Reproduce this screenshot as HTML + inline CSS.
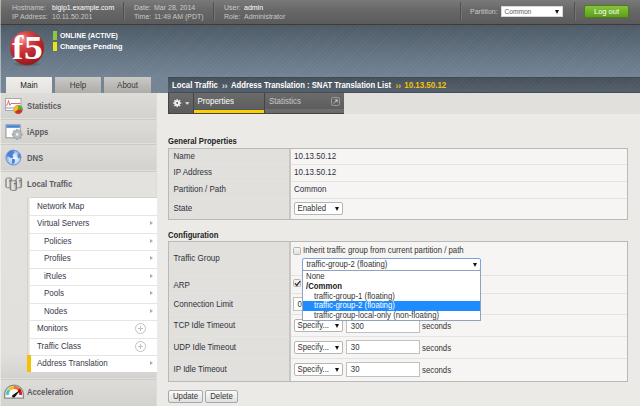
<!DOCTYPE html>
<html><head><meta charset="utf-8">
<style>
*{margin:0;padding:0;box-sizing:border-box}
html,body{width:640px;height:406px;overflow:hidden;background:#ebeae6;font-family:"Liberation Sans",sans-serif;color:#333}
.a{position:absolute;white-space:nowrap}
#top{position:absolute;left:0;top:0;width:640px;height:25px;background:linear-gradient(#797979,#676767 45%,#5b5b5b);border-bottom:1px solid #3c3c3c}
#top .l{position:absolute;font-size:7px;color:#c9c9c9;line-height:8px;white-space:nowrap}
#top .v{position:absolute;font-size:7px;color:#fff;line-height:8px;white-space:nowrap}
.dv{position:absolute;top:2px;width:2px;height:19px;border-left:1px solid #4f4f4f;border-right:1px solid #767676}
#banner{position:absolute;left:0;top:25px;width:640px;height:68px;
background-image:repeating-linear-gradient(135deg,rgba(255,255,255,0.018) 0 1px,rgba(0,0,0,0.02) 1px 3px),linear-gradient(#4f5c68 0,#667686 30px,#758696 52px,#758696 69px)}
#sidebar{position:absolute;left:0;top:93px;width:157px;height:313px;background:#cbcac6;border-right:1px solid #dddcd8}
.tab{position:absolute;top:77px;height:16px;font-size:8px;text-align:center;line-height:17.5px;color:#3a3a3a;background:linear-gradient(#cac9c5,#adaca8)}
.mi{position:absolute;left:0;width:156px;height:26px;background:linear-gradient(#dddcd8,#d3d2ce);border-bottom:1px solid #e1e0dc}
.mi .t{position:absolute;left:27px;top:0.8px;line-height:25px;font-size:7.7px;font-weight:bold;color:#5a5a60}
#sub{position:absolute;left:27px;top:196.5px;width:129.5px;height:175.5px;background:#fff;border-left:3px solid #dcdbd7;border-top:0.5px solid #d4d3cf}
.si{position:absolute;left:0;width:126.5px;height:17.5px;border-top:1px solid #e6e5e1;font-size:8px;line-height:15.5px;color:#383848}
.si .t{position:absolute;left:7px;top:0}
.si .t2{position:absolute;left:14px;top:0}
.arr{position:absolute;right:3.5px;top:5px;width:0;height:0;border-left:3px solid #aaa;border-top:2.5px solid transparent;border-bottom:2.5px solid transparent}
.plus{position:absolute;left:105px;top:2px;width:11px;height:11px;border:1px solid #c2c2c2;border-radius:50%}
.plus:before{content:"";position:absolute;left:4px;top:2px;width:1px;height:5px;background:#c2c2c2}
.plus:after{content:"";position:absolute;left:2px;top:4px;width:5px;height:1px;background:#c2c2c2}
#hdr{position:absolute;left:168px;top:77px;width:472px;height:16px;background-image:repeating-linear-gradient(135deg,rgba(255,255,255,0.018) 0 1px,rgba(0,0,0,0.02) 1px 3px),linear-gradient(#48535e,#55616d);border-top:1px solid #3f4a54;border-bottom:1px solid #434d57}
#hdr .t{position:absolute;left:4px;top:0;line-height:15px;font-size:7.8px;font-weight:bold;color:#fff;white-space:nowrap}
#tbrow{position:absolute;left:168px;top:93px;width:472px;height:21px;background:#e1e0dc}
#tbc{position:absolute;left:168px;top:93px;width:176px;height:21px;background:#454545}
.tb{position:absolute;top:93px;height:20px;background:linear-gradient(#6b6b6b,#5b5b5b)}
.sec{position:absolute;left:168px;font-size:7.7px;font-weight:bold;color:#222;white-space:nowrap}
table{position:absolute;left:168px;width:460px;border-collapse:collapse;border:1px solid #b9b9b9;font-size:8px;color:#303040}
td{border-top:1px solid #e4e3df;padding:0 0 1px 0;vertical-align:middle;white-space:nowrap}
td.k{width:121px;background:#e1e0dc;padding-left:4.5px;border-right:2px solid #c8c7c3}
.ty{display:inline-block;transform:scaleY(1.17)}
.sec,.sec2,.mi .t,.si .t,.si .t2,.hd{transform:scaleY(1.17)}
td.v{background:#f6f5f3;padding-left:3.5px}
.sel{position:absolute;background:#fff;border:1px solid #b5b5b5;border-radius:2px;font-size:7.8px;color:#333;white-space:nowrap}
.inp{position:absolute;background:#fff;border:1px solid #c0c0c0;font-size:7.8px;color:#333;white-space:nowrap}
.tri{position:absolute;width:0;height:0;border-left:2px solid transparent;border-right:2px solid transparent;border-top:4px solid #111}
.cb{position:absolute;width:8px;height:8px;background:linear-gradient(#f4f4f4,#e0e0e0);border:1px solid #b4b4b4;border-radius:1.5px}
.btn{position:absolute;top:390px;height:13px;background:linear-gradient(#fafafa,#e0e0e0);border:1px solid #a9a9a9;border-radius:2px;font-size:7.8px;line-height:11px;text-align:center;color:#333}
.sec2{position:absolute;font-size:7.8px;color:#333;white-space:nowrap}
</style></head><body>
<div id="top">
  <div class="l" style="left:12px;top:4px">Hostname:</div>
  <div class="v" style="left:52px;top:4px">bigip1.example.com</div>
  <div class="l" style="left:12px;top:12.5px">IP Address:</div>
  <div class="l" style="left:52px;top:12.5px">10.11.50.201</div>
  <div class="dv" style="left:123px"></div>
  <div class="l" style="left:134px;top:4px">Date:</div>
  <div class="l" style="left:154px;top:4px">Mar 28, 2014</div>
  <div class="l" style="left:134px;top:12.5px">Time:</div>
  <div class="l" style="left:154px;top:12.5px">11:49 AM (PDT)</div>
  <div class="dv" style="left:213px"></div>
  <div class="l" style="left:224px;top:4px">User:</div>
  <div class="v" style="left:244px;top:4px">admin</div>
  <div class="l" style="left:224px;top:12.5px">Role:</div>
  <div class="l" style="left:244px;top:12.5px">Administrator</div>
  <div class="dv" style="left:460px"></div>
  <div class="l" style="left:470px;top:8px">Partition:</div>
  <div class="a" style="left:500.5px;top:5.8px;width:62.5px;height:11.5px;background:#fff;border:1px solid #d8d8d8;font-size:6.6px;line-height:9.5px;color:#5a5a5a;padding-left:3px">Common<span class="tri" style="left:53px;top:3px;border-top-color:#111;border-left-width:2.4px;border-right-width:2.4px;border-top-width:4px"></span></div>
  <div class="dv" style="left:574px"></div>
  <div class="a" style="left:584px;top:5px;width:45px;height:13px;background:linear-gradient(#86c53a,#5d9e1c);border:1px solid #4c7d1a;border-radius:2px;font-size:7.5px;line-height:11px;color:#fff;text-align:center">Log out</div>
</div>
<div id="banner"></div>
<!-- logo -->
<div class="a" style="left:12px;top:61px;width:30px;height:6px;border-radius:50%;background:radial-gradient(closest-side,rgba(30,30,30,0.45),rgba(30,30,30,0))"></div>
<div class="a" style="left:10px;top:31px;width:34px;height:34px;border-radius:50%;background:radial-gradient(circle at 36% 24%,#f2a4a4 0,#d94a4e 20%,#c02a30 46%,#a01c21 72%,#7c1216 100%)"></div>
<div class="a" style="left:12px;top:28px;font-family:'Liberation Serif',serif;font-weight:bold;font-size:34px;line-height:40px;color:#fff">f</div>
<div class="a" style="left:24px;top:28px;font-family:'Liberation Serif',serif;font-weight:bold;font-size:33.5px;line-height:40px;color:#fff;transform:scaleX(1.12);transform-origin:0 0">5</div>
<div class="a" style="left:53px;top:31px;width:4px;height:9px;background:#8dc63f"></div>
<div class="a" style="left:53px;top:42px;width:4px;height:9px;background:#e6e619"></div>
<div class="a" style="left:60px;top:31px;font-size:6.9px;font-weight:bold;color:#fff;line-height:9px">ONLINE (ACTIVE)</div>
<div class="a" style="left:60px;top:42px;font-size:7.4px;font-weight:bold;color:#fff;line-height:9.5px">Changes Pending</div>
<!-- tabs -->
<div class="tab" style="left:6px;width:46px;background:linear-gradient(#efeeea,#e3e2de);color:#222"><span class="ty">Main</span></div>
<div class="tab" style="left:55px;width:46px"><span class="ty">Help</span></div>
<div class="tab" style="left:104px;width:47px"><span class="ty">About</span></div>
<!-- sidebar -->
<div id="sidebar">
  <div class="mi" style="top:0px;height:26px"><div class="t" style="line-height:25px">Statistics</div></div>
  <div class="mi" style="top:27px;height:24px"><div class="t" style="line-height:23px">iApps</div></div>
  <div class="mi" style="top:52px;height:26px"><div class="t" style="line-height:25px">DNS</div></div>
  <div class="mi" style="top:79px;height:207px;background:linear-gradient(#e3e2de 0,#e1e0dc 180px,#d3d2ce 206px)"><div class="t" style="line-height:23px">Local Traffic</div></div>
  <div class="mi" style="top:287px;height:26px;border-bottom:none"><div class="t" style="line-height:24px">Acceleration</div></div>
</div>
<div class="a" style="left:0;top:0;width:1px;height:406px;background:rgba(255,255,255,0.45)"></div>
<div id="sub">
  <div class="si" style="top:0;border-top:none;line-height:17px"><div class="t">Network Map</div></div>
  <div class="si" style="top:17.5px"><div class="t">Virtual Servers</div><div class="arr"></div></div>
  <div class="si" style="top:35px"><div class="t2">Policies</div><div class="arr"></div></div>
  <div class="si" style="top:52.5px"><div class="t2">Profiles</div><div class="arr"></div></div>
  <div class="si" style="top:70px"><div class="t2">iRules</div><div class="arr"></div></div>
  <div class="si" style="top:87.5px"><div class="t2">Pools</div><div class="arr"></div></div>
  <div class="si" style="top:105px"><div class="t2">Nodes</div><div class="arr"></div></div>
  <div class="si" style="top:122.5px"><div class="t">Monitors</div><div class="plus"></div></div>
  <div class="si" style="top:140px"><div class="t">Traffic Class</div><div class="plus"></div></div>
  <div class="si" style="top:157.5px"><div class="t">Address Translation</div><div class="arr"></div></div>
</div>
<div class="a" style="left:27px;top:196.5px;width:3px;height:175.5px;background:linear-gradient(90deg,#d2d1cd 0,#d2d1cd 1px,#e4e3df 1px,#ecebe8 3px)"></div>
<div class="a" style="left:27px;top:355px;width:3.5px;height:17px;background:#f6c200"></div>
<!-- sidebar icons -->
<svg class="a" style="left:0;top:0" width="160" height="406" viewBox="0 0 160 406">
 <defs>
  <linearGradient id="srv" x1="0" x2="1"><stop offset="0" stop-color="#8a8a8a"/><stop offset="0.3" stop-color="#e8e8e8"/><stop offset="0.7" stop-color="#d0d0d0"/><stop offset="1" stop-color="#7a7a7a"/></linearGradient>
  <radialGradient id="glb" cx="0.55" cy="0.55" r="0.6"><stop offset="0" stop-color="#ffffff"/><stop offset="0.55" stop-color="#c4d7f3"/><stop offset="1" stop-color="#6d98dc"/></radialGradient>
 </defs>
 <!-- statistics -->
 <rect x="5.5" y="98.5" width="15.5" height="12" fill="#fbfbfb" stroke="#a8a8a8" stroke-width="1"/>
 <rect x="6" y="107" width="14.5" height="2" fill="#b9cde6"/>
 <polyline points="6,105.5 7.5,104.5 8.5,100.5 9.8,105.3 11,103.5 20.5,103.5" fill="none" stroke="#de5a62" stroke-width="0.9"/>
 <circle cx="18.2" cy="109.6" r="4.4" fill="#d92a2a" stroke="#999" stroke-width="0.4"/>
 <path d="M18.2,109.6 L18.2,105.2 A4.4,4.4 0 0 1 22.6,109.9 Z" fill="#4cb82f"/>
 <path d="M18.2,109.6 L14.6,112.1 A4.4,4.4 0 0 1 18.2,105.2 Z" fill="#f1c21b"/>
 <!-- iApps -->
 <rect x="6" y="124.8" width="14.2" height="13" fill="#fff" stroke="#8c8c8c" stroke-width="0.9"/>
 <rect x="6.4" y="125.2" width="13.4" height="2.6" fill="#3f86d8"/>
 <g transform="translate(17.2,134.4)">
  <g fill="#a9b3b3" stroke="#8c9696" stroke-width="0.5">
   <circle r="3.9"/>
   <g id="teeth"><rect x="-1.1" y="-5.1" width="2.2" height="10.2" rx="0.6"/><rect x="-5.1" y="-1.1" width="10.2" height="2.2" rx="0.6"/></g>
   <g transform="rotate(45)"><rect x="-1.1" y="-5.1" width="2.2" height="10.2" rx="0.6"/><rect x="-5.1" y="-1.1" width="10.2" height="2.2" rx="0.6"/></g>
  </g>
  <circle r="3.6" fill="#b3bdbd"/>
  <circle r="1.3" fill="#eef2f2"/>
 </g>
 <!-- DNS globe -->
 <circle cx="13.4" cy="157.6" r="7.5" fill="url(#glb)" stroke="#5f8fd8" stroke-width="0.9"/>
 <path d="M7.5,153 Q10,150.2 13.5,150.6 L14.6,152.4 L12.6,154.8 L13.4,157.6 L11,158.2 L8.6,156.4 L7,157 Z" fill="#4d82d8"/>
 <path d="M12,158.6 L15.2,159.4 L14.6,162.6 L12.8,164.8 L11.8,162 Z" fill="#4d82d8"/>
 <path d="M17.6,153.6 L20.4,153.8 L21,157.8 L18.6,158.6 L17.4,156.4 Z" fill="#5a8cdc"/>
 <!-- local traffic servers -->
 <g stroke="#777" stroke-width="0.8">
  <rect x="5.8" y="178" width="5.8" height="9.8" rx="1.5" fill="url(#srv)"/>
  <rect x="15.8" y="178" width="5.8" height="9.8" rx="1.5" fill="url(#srv)"/>
  <rect x="10.2" y="180.8" width="6.4" height="9.6" rx="1.5" fill="url(#srv)"/>
 </g>
 <rect x="9.2" y="180.2" width="1.4" height="1.2" fill="#e02020"/><rect x="9.2" y="181.6" width="1.4" height="1" fill="#5fd35f"/>
 <rect x="19.2" y="180.2" width="1.4" height="1.2" fill="#e02020"/><rect x="19.2" y="181.6" width="1.4" height="1" fill="#5fd35f"/>
 <rect x="14.2" y="183" width="1.4" height="1.2" fill="#e02020"/><rect x="14.2" y="184.4" width="1.4" height="1" fill="#5fd35f"/>
 <!-- acceleration gauge -->
 <path d="M4.6,398.2 L4.6,394.5 A9.4,9.4 0 0 1 23.4,394.5 L23.4,398.2 Z" fill="#f6f6f6" stroke="#8a8a8a" stroke-width="1.3"/>
 <path d="M7.5,395 A6.5,6.5 0 0 1 9,390" fill="none" stroke="#3cc8c8" stroke-width="2.8"/>
 <path d="M9,390 A6.5,6.5 0 0 1 14,387.5" fill="none" stroke="#f0c020" stroke-width="2.8"/>
 <path d="M14,387.5 A6.5,6.5 0 0 1 18.5,389" fill="none" stroke="#f07020" stroke-width="2.8"/>
 <path d="M18.5,389 A6.5,6.5 0 0 1 20.5,395" fill="none" stroke="#e01818" stroke-width="2.8"/>
 <path d="M12.4,395.2 L21.2,389.2 L14.4,397.4 Z" fill="#111"/><circle cx="13.4" cy="396.3" r="1.2" fill="#111"/>
</svg>
<!-- header -->
<div id="hdr"></div>
<div class="a hd" style="left:172px;top:77.5px;line-height:15px;font-size:7.8px;font-weight:bold;color:#fff">Local Traffic</div>
<div class="a" style="left:222px;top:78.5px;line-height:15px;font-size:8.3px;font-weight:bold;color:#e0e0e0">&rsaquo;&rsaquo;</div>
<div class="a hd" style="left:231px;top:77.5px;line-height:15px;font-size:7.7px;font-weight:bold;color:#fff">Address Translation : SNAT Translation List</div>
<div class="a" style="left:395.5px;top:78.5px;line-height:15px;font-size:8.3px;font-weight:bold;color:#f3c300">&rsaquo;&rsaquo;</div>
<div class="a hd" style="left:404.3px;top:77.5px;line-height:15px;font-size:7.95px;font-weight:bold;color:#f3c300">10.13.50.12</div>
<div id="tbrow"></div><div id="tbc"></div>
<div class="tb" style="left:168.5px;width:24px"></div>
<div class="tb" style="left:194px;width:70px"></div>
<div class="a" style="left:194px;top:108.5px;width:70px;height:4.6px;background:#fcd000;border-top:1px solid #4d596a"></div>
<div class="a hd" style="left:197.5px;top:93.5px;font-size:8px;color:#fff;line-height:16px">Properties</div>
<div class="tb" style="left:265px;width:78.5px;background:linear-gradient(#6b6b6b,#5d5d5d 16px,#6e6e6e 16.5px,#6a6a6a)"></div>
<div class="a hd" style="left:269px;top:93.5px;font-size:8px;color:#c8c8c8;line-height:16px">Statistics</div>
<svg class="a" style="left:330px;top:96px" width="11" height="11" viewBox="0 0 11 11"><rect x="1.5" y="1.5" width="8" height="8" rx="1.8" fill="none" stroke="#9c9c9c" stroke-width="1"/><path d="M3.6,7.6 L6.6,4.6" fill="none" stroke="#c8c8c8" stroke-width="0.9"/><path d="M4.6,3.6 L7.6,3.6 L7.6,6.6 Z" fill="#d0d0d0"/></svg>
<svg class="a" style="left:168px;top:93px" width="25" height="20" viewBox="0 0 25 20"><g transform="translate(9.2,10.1)" fill="#f0f0f0"><circle r="2.8"/><g id="gt"><rect x="-0.7" y="-4" width="1.4" height="8"/><rect x="-4" y="-0.7" width="8" height="1.4"/></g><g transform="rotate(45)"><rect x="-0.7" y="-4" width="1.4" height="8"/><rect x="-4" y="-0.7" width="8" height="1.4"/></g><circle r="1" fill="#5e5e5e"/></g><path d="M17,9.2 L21.5,9.2 L19.25,11.8 Z" fill="#e8e8e8"/></svg>
<!-- General -->
<div class="sec" style="top:137px;line-height:10px">General Properties</div>
<table style="top:148px">
  <tr style="height:16px"><td class="k" style="border-top:none"><span class="ty">Name</span></td><td class="v" style="border-top:none"><span class="ty">10.13.50.12</span></td></tr>
  <tr style="height:17px"><td class="k"><span class="ty">IP Address</span></td><td class="v"><span class="ty">10.13.50.12</span></td></tr>
  <tr style="height:17px"><td class="k"><span class="ty">Partition / Path</span></td><td class="v"><span class="ty">Common</span></td></tr>
  <tr style="height:21px"><td class="k" style="padding-bottom:2px"><span class="ty">State</span></td><td class="v"></td></tr>
</table>
<div class="a" style="left:168px;top:148px;width:460px;height:72px;border:1px solid #b9b9b9"></div>
<div class="sel" style="left:294px;top:202px;width:49px;height:12.5px;line-height:11px;padding-left:2.5px"><span class="ty">Enabled</span><span class="tri" style="left:40px;top:3.8px"></span></div>
<!-- Configuration -->
<div class="sec" style="top:231px;line-height:10px">Configuration</div>
<table style="top:241px">
  <tr style="height:34px"><td class="k" style="border-top:none"><span class="ty">Traffic Group</span></td><td class="v" style="border-top:none"></td></tr>
  <tr style="height:18px"><td class="k" style="padding:2px 0 0 4.5px"><span class="ty">ARP</span></td><td class="v"></td></tr>
  <tr style="height:21px"><td class="k" style="padding:1px 0 0 4.5px"><span class="ty">Connection Limit</span></td><td class="v"></td></tr>
  <tr style="height:22px"><td class="k"><span class="ty">TCP Idle Timeout</span></td><td class="v"></td></tr>
  <tr style="height:22px"><td class="k"><span class="ty">UDP Idle Timeout</span></td><td class="v"></td></tr>
  <tr style="height:23px"><td class="k"><span class="ty">IP Idle Timeout</span></td><td class="v"></td></tr>
</table>
<div class="a" style="left:168px;top:241px;width:460px;height:141px;border:1px solid #b9b9b9"></div>
<div class="cb" style="left:293px;top:247px"></div>
<div class="sec2" style="left:303px;top:246px;line-height:10px">Inherit traffic group from current partition / path</div>
<div class="cb" style="left:293px;top:279px"></div><svg class="a" style="left:293px;top:279px" width="9" height="9" viewBox="0 0 9 9"><path d="M2,4.4 L3.8,6.4 L7.2,2" fill="none" stroke="#1a1a1a" stroke-width="1.15"/></svg>
<div class="inp" style="left:293px;top:297px;width:20px;height:14px;line-height:13.5px;padding-left:3.5px"><span class="ty">0</span></div>
<div class="sel" style="left:294px;top:319px;width:49px;height:13px;line-height:11px;padding-left:2.5px"><span class="ty">Specify...</span><span class="tri" style="left:40px;top:3.8px"></span></div>
<div class="inp" style="left:346px;top:319px;width:74px;height:14px;line-height:13px;padding-left:3.8px"><span class="ty">300</span></div>
<div class="sec2" style="left:422px;top:321.5px;line-height:10px">seconds</div>
<div class="sel" style="left:294px;top:341px;width:49px;height:13px;line-height:11px;padding-left:2.5px"><span class="ty">Specify...</span><span class="tri" style="left:40px;top:3.8px"></span></div>
<div class="inp" style="left:346px;top:340px;width:74px;height:14px;line-height:12px;padding-top:1px;padding-left:3.8px"><span class="ty">30</span></div>
<div class="sec2" style="left:422px;top:343.5px;line-height:10px">seconds</div>
<div class="sel" style="left:294px;top:363px;width:49px;height:13px;line-height:11px;padding-left:2.5px"><span class="ty">Specify...</span><span class="tri" style="left:40px;top:3.8px"></span></div>
<div class="inp" style="left:346px;top:362px;width:74px;height:14.5px;line-height:12px;padding-top:1px;padding-left:3.8px"><span class="ty">30</span></div>
<div class="sec2" style="left:422px;top:365.5px;line-height:10px">seconds</div>
<!-- open select -->
<div class="sel" style="left:302px;top:258px;width:179px;height:12.5px;line-height:11px;padding-left:3.5px;border:1px solid #7aa4e0;border-radius:2px"><span class="ty">traffic-group-2 (floating)</span><span class="tri" style="left:170px;top:3.8px"></span></div>
<div class="a" style="left:302px;top:270px;width:179px;height:50.5px;background:#fff;border:1px solid #8fa3bb;font-size:7.8px;color:#333">
  <div style="position:absolute;left:3px;top:1px;line-height:10px"><span class="ty">None</span></div>
  <div style="position:absolute;left:3px;top:11px;line-height:10px;font-weight:bold;color:#222"><span class="ty">/Common</span></div>
  <div style="position:absolute;left:11px;top:21px;line-height:10px"><span class="ty">traffic-group-1 (floating)</span></div>
  <div style="position:absolute;left:0;top:30px;width:177px;height:9.5px;background:#1e8cff"></div>
  <div style="position:absolute;left:11px;top:30px;line-height:10px;color:#fff"><span class="ty">traffic-group-2 (floating)</span></div>
  <div style="position:absolute;left:11px;top:40px;line-height:10px"><span class="ty">traffic-group-local-only (non-floating)</span></div>
</div>
<div class="btn" style="left:168px;width:35px"><span class="ty">Update</span></div>
<div class="btn" style="left:205px;width:33px"><span class="ty">Delete</span></div>
</body></html>
